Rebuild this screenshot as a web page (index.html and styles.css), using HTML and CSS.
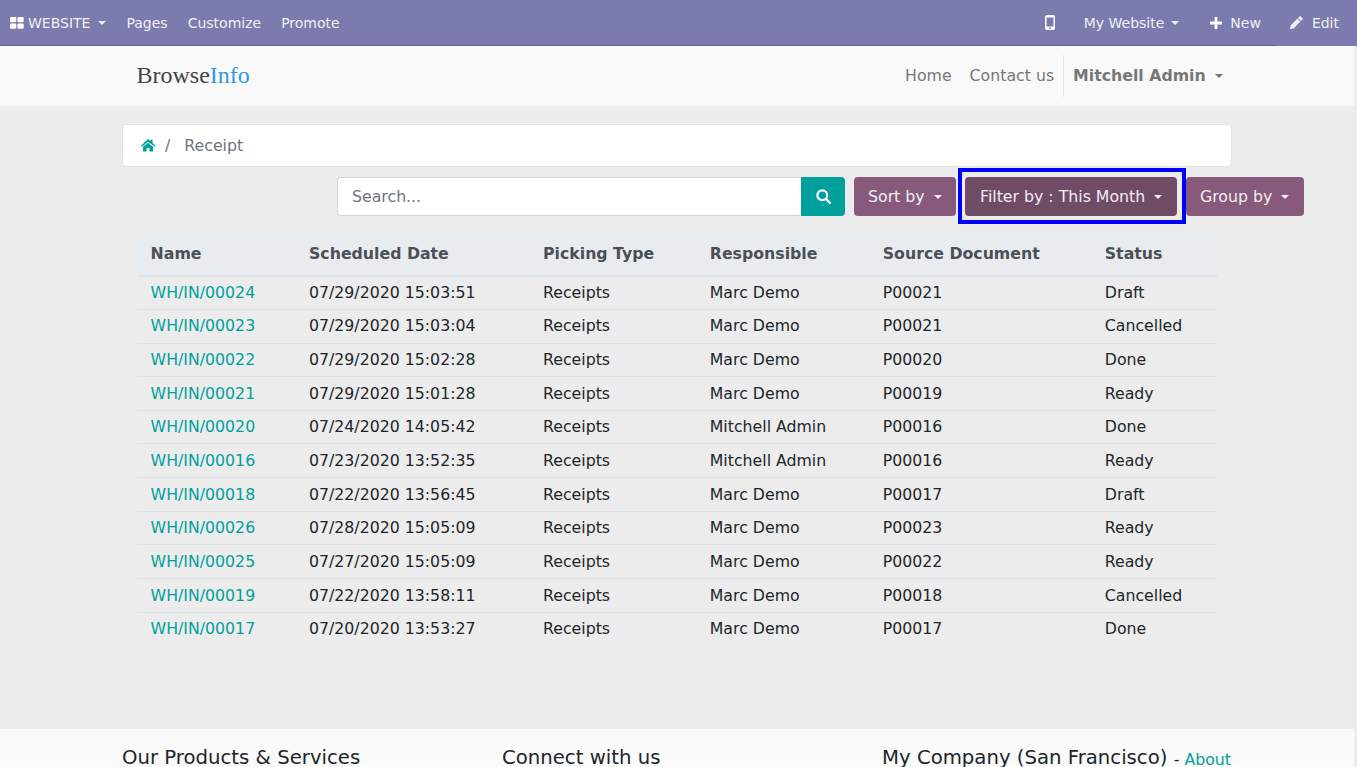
FILE: index.html
```html
<!DOCTYPE html>
<html lang="en">
<head>
<meta charset="utf-8">
<title>Receipt</title>
<link rel="stylesheet" href="styles.css">
</head>
<body>
<div class="page">
  <nav class="topbar">
    <div class="topgroup">
      <a class="toplink first">
        <svg class="ico-grid" viewBox="0 0 14 12"><rect x="0" y="0" width="6.3" height="5.3" rx="1"/><rect x="7.4" y="0" width="6.3" height="5.3" rx="1"/><rect x="0" y="6.4" width="6.3" height="5.3" rx="1"/><rect x="7.4" y="6.4" width="6.3" height="5.3" rx="1"/></svg>
        <span>WEBSITE</span><i class="caret"></i>
      </a>
      <a class="toplink">Pages</a>
      <a class="toplink">Customize</a>
      <a class="toplink">Promote</a>
    </div>
    <div class="topgroup">
      <a class="toplink phone">
        <svg class="ico-phone" viewBox="0 0 10 15"><path fill-rule="evenodd" d="M2 0h6a2 2 0 0 1 2 2v11a2 2 0 0 1-2 2H2a2 2 0 0 1-2-2V2a2 2 0 0 1 2-2zM1.500 2.500v9h7v-9zM5 12.300a.9.9 0 1 0 0 1.800.9.9 0 0 0 0-1.800z"/></svg>
      </a>
      <a class="toplink mysite"><span>My Website</span><i class="caret"></i></a>
      <a class="toplink action">
        <svg class="ico-plus" viewBox="0 0 12 12"><path d="M4.600 0h2.800v4.600H12v2.800H7.400V12H4.600V7.400H0V4.600h4.600z"/></svg>
        <span>New</span>
      </a>
      <a class="toplink action edit">
        <svg class="ico-pencil" viewBox="0 0 13 13"><path d="M9.400.6a1 1 0 0 1 1.400 0l1.600 1.600a1 1 0 0 1 0 1.400l-1.300 1.300-3-3zM7.400 2.600l3 3L3.600 12.400 0 13l.6-3.600z"/></svg>
        <span>Edit</span>
      </a>
    </div>
  </nav>

  <header class="sitehead">
    <div class="container headrow">
      <a class="brand">Browse<span class="brand-accent">Info</span></a>
      <div class="headnav">
        <a class="headlink">Home</a>
        <a class="headlink">Contact us</a>
        <a class="headuser"><span>Mitchell Admin</span><i class="caret"></i></a>
      </div>
    </div>
  </header>

  <main class="main">
    <div class="container">
      <div class="crumb">
        <svg class="ico-home" viewBox="0.7 0 13.8 12" preserveAspectRatio="none"><path d="M7.500 0l2.300 2V.8h2v3l3 2.700-.8.9L7.500 2.600 1.500 7.400.7 6.500zM2.700 7.600l4.800-3.900 4.800 3.900V12H8.900V8.700H6.100V12H2.700z"/></svg>
        <span class="crumb-sep">/</span>
        <span class="crumb-cur">Receipt</span>
      </div>
      <div class="toolbar">
        <div class="search">
          <div class="search-input">Search...</div>
          <div class="search-btn">
            <svg class="ico-search" viewBox="0 0 15 15"><circle cx="6.300" cy="6.300" r="4.900" fill="none" stroke="#fff" stroke-width="2.200"/><path d="M10 10l3.800 3.800" stroke="#fff" stroke-width="2.400" stroke-linecap="round"/></svg>
          </div>
        </div>
        <a class="btn sort"><span>Sort by</span><i class="caret"></i></a>
        <div class="highlight"><a class="btn filter"><span>Filter by : This Month</span><i class="caret"></i></a></div>
        <a class="btn group"><span>Group by</span><i class="caret"></i></a>
      </div>
      <table class="grid">
        <colgroup><col class="c1"><col class="c2"><col class="c3"><col class="c4"><col class="c5"><col class="c6"></colgroup>
        <thead>
          <tr><th>Name</th><th>Scheduled Date</th><th>Picking Type</th><th>Responsible</th><th>Source Document</th><th>Status</th></tr>
        </thead>
        <tbody>
          <tr><td><a>WH/IN/00024</a></td><td>07/29/2020 15:03:51</td><td>Receipts</td><td>Marc Demo</td><td>P00021</td><td>Draft</td></tr>
          <tr><td><a>WH/IN/00023</a></td><td>07/29/2020 15:03:04</td><td>Receipts</td><td>Marc Demo</td><td>P00021</td><td>Cancelled</td></tr>
          <tr><td><a>WH/IN/00022</a></td><td>07/29/2020 15:02:28</td><td>Receipts</td><td>Marc Demo</td><td>P00020</td><td>Done</td></tr>
          <tr><td><a>WH/IN/00021</a></td><td>07/29/2020 15:01:28</td><td>Receipts</td><td>Marc Demo</td><td>P00019</td><td>Ready</td></tr>
          <tr><td><a>WH/IN/00020</a></td><td>07/24/2020 14:05:42</td><td>Receipts</td><td>Mitchell Admin</td><td>P00016</td><td>Done</td></tr>
          <tr><td><a>WH/IN/00016</a></td><td>07/23/2020 13:52:35</td><td>Receipts</td><td>Mitchell Admin</td><td>P00016</td><td>Ready</td></tr>
          <tr><td><a>WH/IN/00018</a></td><td>07/22/2020 13:56:45</td><td>Receipts</td><td>Marc Demo</td><td>P00017</td><td>Draft</td></tr>
          <tr><td><a>WH/IN/00026</a></td><td>07/28/2020 15:05:09</td><td>Receipts</td><td>Marc Demo</td><td>P00023</td><td>Ready</td></tr>
          <tr><td><a>WH/IN/00025</a></td><td>07/27/2020 15:05:09</td><td>Receipts</td><td>Marc Demo</td><td>P00022</td><td>Ready</td></tr>
          <tr><td><a>WH/IN/00019</a></td><td>07/22/2020 13:58:11</td><td>Receipts</td><td>Marc Demo</td><td>P00018</td><td>Cancelled</td></tr>
          <tr><td><a>WH/IN/00017</a></td><td>07/20/2020 13:53:27</td><td>Receipts</td><td>Marc Demo</td><td>P00017</td><td>Done</td></tr>
        </tbody>
      </table>
    </div>
  </main>

  <footer class="footer">
    <div class="container footrow">
      <div class="fcol f1"><h5>Our Products &amp; Services</h5></div>
      <div class="fcol f2"><h5>Connect with us</h5></div>
      <div class="fcol f3"><h5>My Company (San Francisco) <small>- <a>About</a></small></h5></div>
    </div>
  </footer>
</div>
</body>
</html>
```
FILE: styles.css
```css
* { box-sizing: border-box; }
html, body { margin: 0; padding: 0; height: 100%; overflow: hidden; }
body {
  font-family: "DejaVu Sans", sans-serif;
  font-size: 15.75px;
  line-height: 1.5;
  color: #212529;
  background: #ececec;
}
.page { width: 1354px; }
.container { width: 1110px; margin: 0 auto; }

.caret {
  display: inline-block;
  width: 0; height: 0;
  border-top: 4.5px solid currentColor;
  border-left: 4.5px solid transparent;
  border-right: 4.5px solid transparent;
}

/* top bar */
.topbar {
  width: 1357px;
  height: 46px;
  background: #7c7bad;
  border-bottom: 1px solid #5f5e97;
  display: flex;
  justify-content: space-between;
  color: #f0f0f7;
  font-size: 14px;
}
.topgroup { display: flex; align-items: flex-start; }
.toplink { display: flex; align-items: center; padding: 0 10px; line-height: 46px; height: 45px; }
.ico-grid { width: 14px; height: 12px; fill: #fff; margin-right: 4px; }
.first .caret { margin-left: 8px; }
.phone { padding: 0 29px 0 0; }
.ico-phone { width: 10px; height: 15px; fill: #fff; }
.mysite { padding: 0 16px 0 0; }
.mysite .caret { margin-left: 7px; }
.action { padding: 0 15px; }
.action.edit { padding: 0 18px 1px 14.5px; height: 46px; background: #7c7bad; }
.ico-plus { width: 12px; height: 12px; fill: #fff; margin-right: 8px; }
.ico-pencil { width: 13px; height: 13px; fill: #f0f0f7; margin-right: 8.5px; }

/* site head */
.sitehead { height: 60px; background: #f9f9f9; }
.headrow { display: flex; justify-content: space-between; align-items: center; height: 60px; padding: 0 0 0 14.5px; }
.brand {
  font-family: "Liberation Serif", serif;
  font-size: 24px;
  color: #444;
  line-height: 58px;
  padding-bottom: 2px;
}
.brand-accent { color: #3498db; }
.headnav { display: flex; align-items: center; height: 42px; color: #777; padding-right: 8.8px; }
.headlink { padding: 0 9px; }
.headuser {
  display: flex; align-items: center;
  height: 42px;
  border-left: 1px solid #e6e6e6;
  padding: 0 0 0 9px;
  font-weight: 700;
  color: #777;
}
.headuser .caret { margin-left: 9.5px; }

/* main */
.main { height: 623px; padding-top: 18px; }
.crumb {
  height: 43px;
  background: #fff;
  border: 1px solid #e2e2e2;
  border-radius: 4px;
  display: flex;
  align-items: center;
  padding-left: 18px;
  color: #6c757d;
}
.ico-home { width: 14.3px; height: 12.4px; fill: #00a09d; }
.crumb-sep { margin-left: 9.7px; }
.crumb-cur { margin-left: 14px; }

.toolbar { display: flex; align-items: flex-start; height: 65.77px; padding-top: 10px; margin-left: 215px; width: 975px; }
.search { display: flex; width: 508px; height: 39px; }
.search-input {
  flex: 1;
  background: #fff;
  border: 1px solid #ced4da;
  border-right: 0;
  border-radius: 4px 0 0 4px;
  padding: 0 14px;
  line-height: 37px;
  color: #6c757d;
}
.search-btn {
  width: 44px;
  background: #00a09d;
  border-radius: 0 4px 4px 0;
  display: flex; align-items: center; justify-content: center;
}
.ico-search { width: 15px; height: 15px; }
.btn {
  display: flex; align-items: center;
  height: 39px;
  background: #875a7b;
  color: #f2eef1;
  border-radius: 4px;
  padding: 0 14px;
}
.btn .caret { margin-left: 9px; }
.sort { margin-left: 9px; width: 102px; }
.highlight {
  flex: none;
  width: 228px;
  height: 56px;
  margin: -9px 0 0 2px;
  padding: 5px 5px 4px 3px;
  border: 4px solid #0000ff;
}
.btn.filter { background: #704b66; padding: 0 14px 0 15px; width: 212px; }
.group { width: 118px; }

/* table */
.grid { width: 1080px; margin-left: 15px; border-collapse: collapse; table-layout: fixed; }
.c1 { width: 158.4px; } .c2 { width: 234px; } .c3 { width: 166.8px; }
.c4 { width: 173px; } .c5 { width: 222px; } .c6 { width: 125.8px; }
.grid th {
  text-align: left;
  background: #e9ecef;
  color: #495057;
  font-weight: 700;
  height: 43px;
  padding: 0 13.6px;
  border-bottom: 2px solid #dee2e6;
}
.grid td { padding: 0 13.6px; height: 33.65px; border-top: 1px solid #dee2e6; }
.grid tbody tr:first-child td { border-top: 0; }
.grid a { color: #00a09d; }

/* footer */
.footer { height: 60px; background: #fafafa; padding-top: 14px; }
.footrow { display: flex; }
.fcol h5 { margin: 0; font-size: 19.69px; font-weight: 400; line-height: 1.5; }
.f1 { width: 380px; } .f2 { width: 380px; } .f3 { flex: 1; }
.fcol small { font-size: 15.75px; vertical-align: -1px; }
.fcol a { color: #00a09d; }
```
